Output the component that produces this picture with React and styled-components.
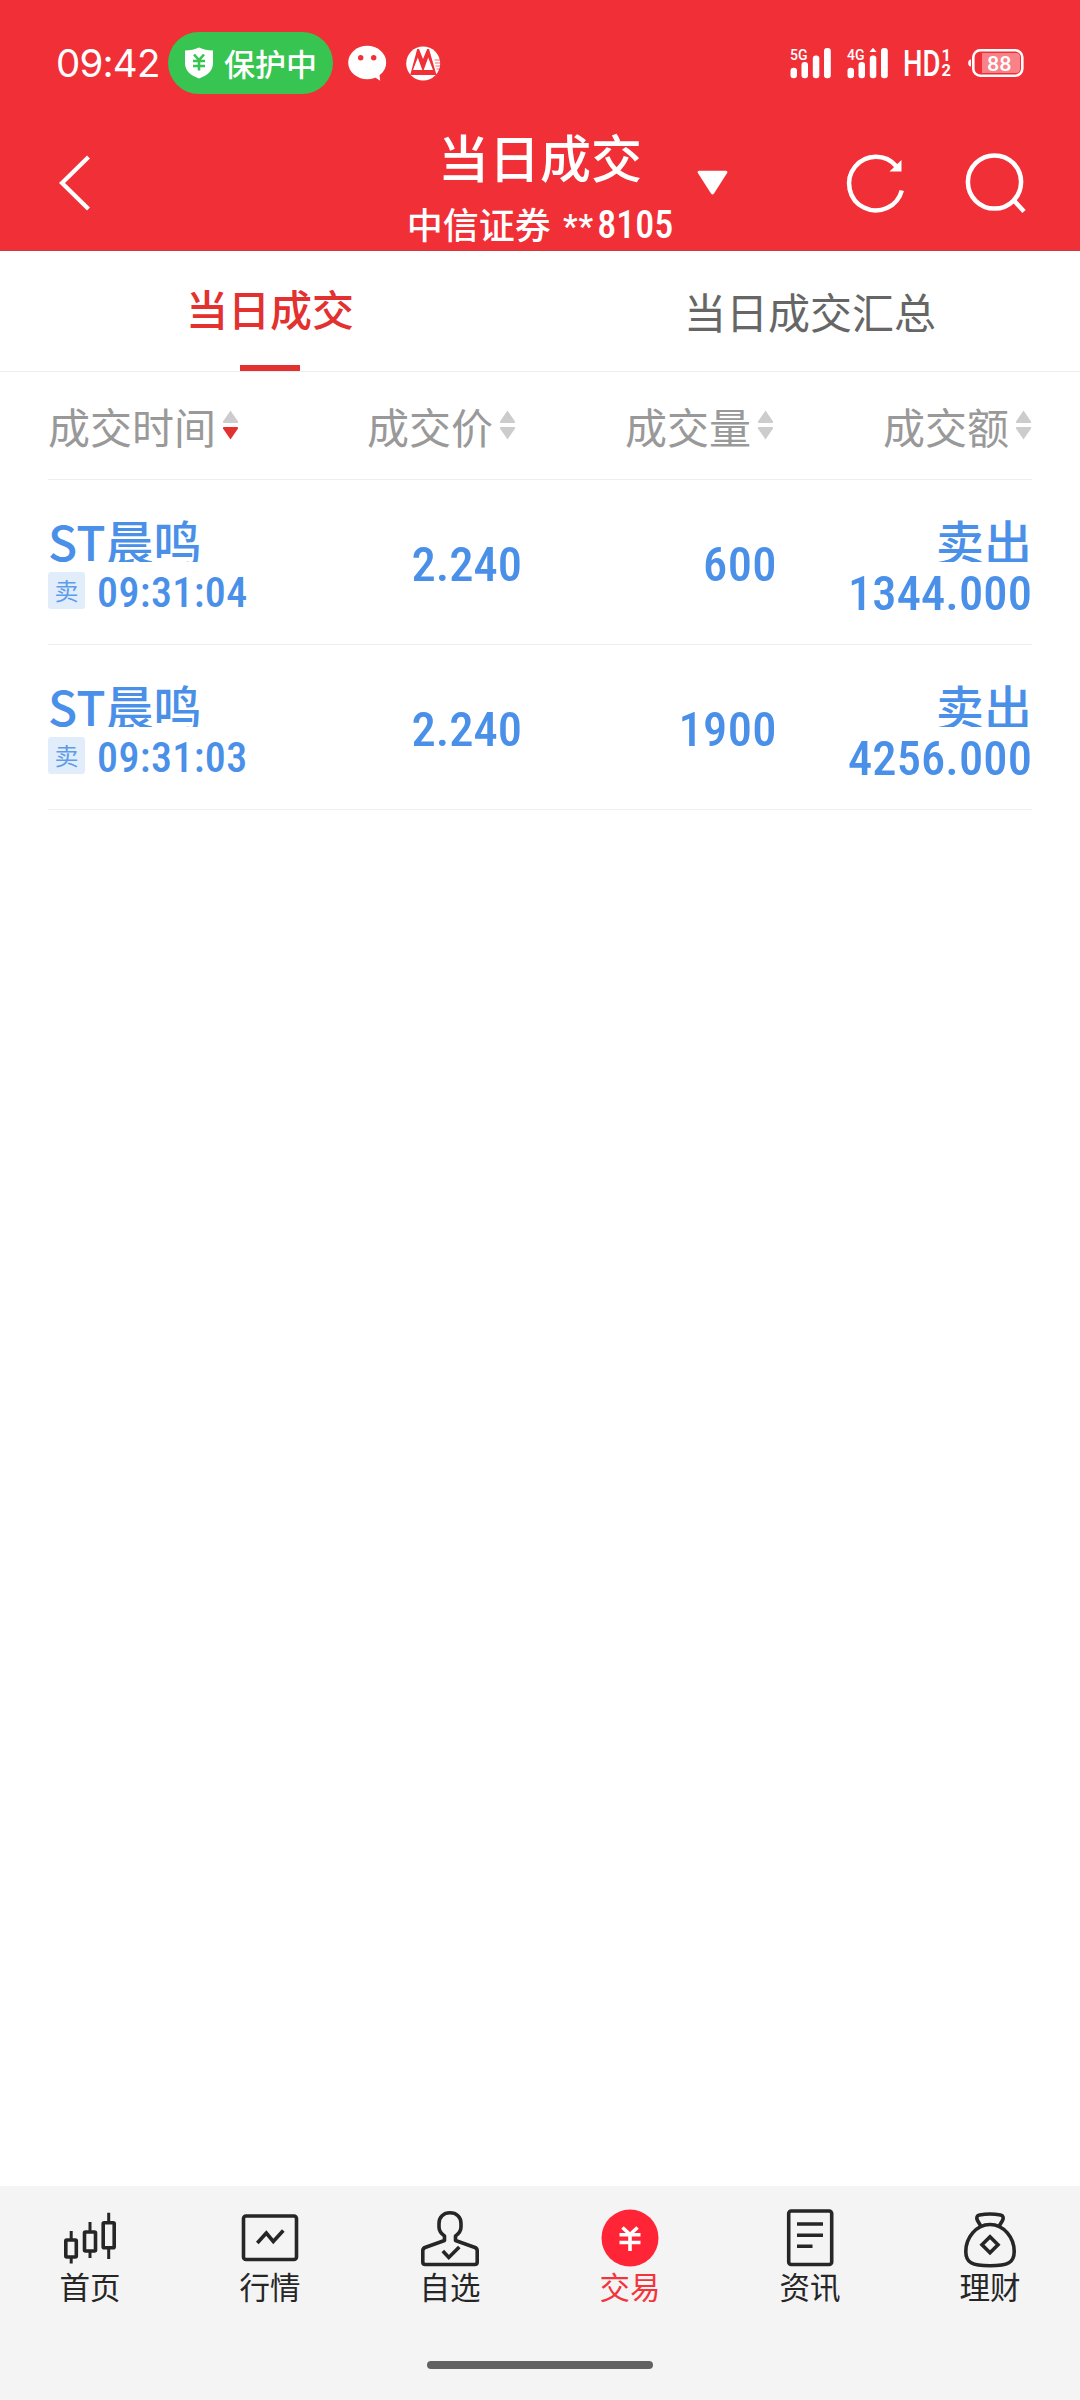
import React from "react";
import styled, { createGlobalStyle, css } from "styled-components";

const GlobalStyle = createGlobalStyle`
  * {
    box-sizing: border-box;
  }

  body {
    margin: 0;
    background-color: #ffffff;
    font-family: "Roboto", "Noto Sans CJK SC", sans-serif;
  }
`;

const StyledScreen = styled.div`
  display: flex;
  flex-direction: column;
  width: 1080px;
  height: 2400px;
  background-color: #ffffff;
`;

const StyledHeader = styled.header`
  height: 251px;
  background-color: #f12f37;
  border-bottom: 1px solid #cc3a42;
  color: #ffffff;
`;

const StyledStatusBar = styled.div`
  display: flex;
  align-items: center;
  height: 126px;
  padding: 0 56px;
`;

const StyledClock = styled.div`
  width: 112px;
  font-family: "Inter", sans-serif;
  font-size: 38.5px;
  line-height: 62px;
  letter-spacing: -0.8px;
`;

const StyledGuardPill = styled.div`
  display: flex;
  align-items: center;
  gap: 10px;
  width: 165px;
  height: 62px;
  padding-left: 16px;
  margin-right: 15px;
  border-radius: 31px;
  background-color: #38c450;
`;

const StyledGuardText = styled.span`
  font-family: "Noto Sans CJK SC", sans-serif;
  font-size: 31px;
  font-weight: 500;
  line-height: 44px;
  padding-bottom: 1px;
  white-space: nowrap;
`;

const StyledNotices = styled.div`
  display: flex;
  align-items: center;
  gap: 19px;
`;

const StyledStatusRight = styled.div`
  display: flex;
  align-items: center;
  gap: 14px;
  margin-left: auto;
`;

const StyledTitleBar = styled.div`
  display: grid;
  grid-template-columns: 390px 300px 390px;
  height: 124px;
`;

const StyledBack = styled.div`
  display: flex;
  padding: 27px 0 0 58px;
`;

const StyledTitleBlock = styled.div`
  display: flex;
  flex-direction: column;
  align-items: center;
`;

const StyledTitle = styled.div`
  font-family: "Noto Sans CJK SC", sans-serif;
  font-size: 51px;
  font-weight: 500;
  line-height: 60px;
`;

const StyledAccount = styled.div`
  display: flex;
  align-items: flex-start;
  font-family: "Noto Sans CJK SC", sans-serif;
  font-size: 36px;
  font-weight: 500;
  line-height: 50px;
  padding-top: 12px;
`;

const StyledDigits = styled.span`
  font-family: "Roboto", sans-serif;
  font-stretch: 85%;
  font-weight: 500;
  font-size: ${(props) => props.$size}px;
  letter-spacing: ${(props) => props.$spacing}px;
`;

const StyledMask = styled(StyledDigits)`
  padding: 4px 3px 0 12px;
`;

const StyledAccountTail = styled(StyledDigits)`
  padding-top: 2px;
`;

const StyledActions = styled.div`
  display: flex;
  justify-content: space-between;
`;

const StyledCaret = styled.div`
  padding: 44px 0 0 7px;
`;

const StyledTabs = styled.nav`
  display: grid;
  grid-template-columns: 1fr 1fr;
  height: 121px;
  border-bottom: 1px solid #eeeeee;
  font-family: "Noto Sans CJK SC", sans-serif;
`;

const StyledTab = styled.div`
  display: flex;
  flex-direction: column;
  align-items: center;
  justify-content: space-between;
  padding-top: 30px;
  font-size: 42px;
  line-height: 60px;
  color: #666666;

  ${(props) =>
    props.$active &&
    css`
      padding-top: 27px;
      font-weight: 500;
      color: #e2312f;

      &::after {
        content: "";
        width: 60px;
        height: 6px;
        background-color: #e2312f;
      }
    `}
`;

const StyledTable = styled.main`
  flex: 1;
  padding: 0 48px;
`;

const StyledHeadRow = styled.div`
  display: grid;
  grid-template-columns: 210px 258px 258px 258px;
  height: 108px;
  border-bottom: 1px solid #eeeeee;
`;

const StyledHeadCell = styled.div`
  display: flex;
  align-items: center;
  justify-content: ${(props) => (props.$left ? "flex-start" : "flex-end")};
  gap: 6px;
  padding-bottom: 1px;
  font-family: "Noto Sans CJK SC", sans-serif;
  font-size: 42px;
  color: #999999;
  white-space: nowrap;
`;

const StyledRow = styled.div`
  display: grid;
  grid-template-columns: 219px 255px 255px 255px;
  height: 165px;
  border-bottom: 1px solid #eeeeee;
  color: #4a90e8;
`;

const StyledStack = styled.div`
  display: flex;
  flex-direction: column;
  align-items: ${(props) => (props.$right ? "flex-end" : "flex-start")};
  padding-top: 36px;
`;

/* the line box is shorter than the glyphs, so their feet are cut off */
const StyledName = styled.div`
  height: 46px;
  overflow: hidden;
  font-family: "Noto Sans CJK SC", sans-serif;
  font-size: 48px;
  font-weight: 500;
  line-height: 48px;
  white-space: nowrap;
`;

const StyledTimeLine = styled.div`
  display: flex;
  gap: 12px;
  height: 37px;
  margin-top: 10px;
  line-height: 42px;
`;

const StyledSideTag = styled.span`
  width: 37px;
  height: 37px;
  border-radius: 3px;
  background-color: #e2edfb;
  font-family: "Noto Sans CJK SC", sans-serif;
  font-size: 24px;
  line-height: 36px;
  text-align: center;
  color: #5e9cea;
`;

const StyledAmount = styled.div`
  height: 46px;
  margin-top: 5px;
  line-height: 54px;
`;

const StyledNumberCell = styled.div`
  display: flex;
  align-items: center;
  justify-content: flex-end;
  padding-top: 4px;
`;

const StyledTabBar = styled.footer`
  display: flex;
  flex-direction: column;
  align-items: center;
  height: 214px;
  background-color: #f4f4f4;
`;

const StyledTabItems = styled.div`
  display: grid;
  grid-template-columns: repeat(6, 180px);
  height: 175px;
`;

const StyledTabItem = styled.div`
  display: flex;
  flex-direction: column;
  align-items: center;
  padding-top: 20px;
  font-family: "Noto Sans CJK SC", sans-serif;
  font-size: 30.5px;
  line-height: 32px;
  color: ${(props) => (props.$active ? "#f5333d" : "#262626")};
`;

const StyledHomeIndicator = styled.div`
  width: 226px;
  height: 8px;
  border-radius: 4px;
  background-color: #626262;
`;

const ShieldIcon = () => (
  <svg width="30" height="32" viewBox="0 0 30 32">
    <path
      d="M15 0.500C11 2.500 6 3.500 1 3.500V16c0 8 6 12.500 14 15.500 8-3 14-7.500 14-15.500V3.500C24 3.500 19 2.500 15 .500z"
      fill="#fff"
    />
    <path
      d="M10 7.500l5 5.500 5-5.500M9 14h12M9 19h12M15 13v10.500"
      stroke="#38c450"
      strokeWidth="2.600"
      fill="none"
    />
  </svg>
);

const ChatIcon = () => (
  <svg width="39" height="36" viewBox="0 0 39 36">
    <ellipse cx="19.200" cy="17.500" rx="19" ry="16.700" fill="#fff" />
    <path d="M25 31l7.200 4.700-1-8z" fill="#fff" />
    <circle cx="12.700" cy="12.700" r="2.700" fill="#f12f37" />
    <circle cx="25.700" cy="12.700" r="2.700" fill="#f12f37" />
  </svg>
);

const BankIcon = () => (
  <svg width="35" height="35" viewBox="0 0 35 35">
    <circle cx="17.200" cy="17.500" r="17" fill="#fff" />
    <path d="M4.200 29L11.200 3h1.800l4 10 4.200-10h1.800l7.500 26z" fill="#f12f37" />
    <path d="M7 24l4.800-12.500L16.300 24zM17.700 24l4.500-12.500L27 24z" fill="#fff" />
    <path d="M28.500 14h6M29 17h6M29.500 20h5M30.500 23h3.500" stroke="#f12f37" strokeWidth="1.200" opacity="0.7" />
  </svg>
);

const SignalIcon = ({ label, roaming }) => (
  <svg width="43" height="32" viewBox="0 0 43 32" overflow="visible">
    <text
      x="0"
      y="12.500"
      fontFamily="Roboto"
      fontWeight="500"
      fontSize="15.500"
      fill="#fff"
      textLength="17.500"
      lengthAdjust="spacingAndGlyphs"
    >
      {label}
    </text>
    <g fill="#fff">
      <rect x="0.500" y="20.700" width="6.500" height="10.500" rx="3.200" />
      <rect x="11.500" y="15" width="6.500" height="16.200" rx="3" />
      <rect x="22.800" y="8.500" width="6.500" height="22.700" rx="3" />
      <rect x="34" y="1" width="6.800" height="30.200" rx="3" />
      {roaming && <path d="M22.500 5L26 .800 29.600 5z" />}
    </g>
  </svg>
);

const HdIcon = () => (
  <svg width="50" height="32" viewBox="0 0 50 32" overflow="visible">
    <g fontFamily="Roboto" fontWeight="500" fill="#fff">
      <text x="-1" y="29" fontSize="36.500" textLength="37.500" lengthAdjust="spacingAndGlyphs">
        HD
      </text>
      <text x="37.500" y="14" fontSize="16.500" fontWeight="700">
        1
      </text>
      <text x="37.500" y="29" fontSize="16.500" fontWeight="700">
        2
      </text>
    </g>
  </svg>
);

const BatteryIcon = () => (
  <svg width="56" height="30" viewBox="0 0 56 30">
    <path d="M3 11.500v7C1 18.500 .200 17 .200 15S1 11.500 3 11.500z" fill="#fff" />
    <rect x="5.300" y="2.300" width="49" height="25.400" rx="7" fill="none" stroke="#fff" strokeWidth="2.600" />
    <path d="M14 5h34a4 4 0 0 1 4 4v12a4 4 0 0 1-4 4H14z" fill="#f88288" />
    <text
      x="19"
      y="22.500"
      fontFamily="Roboto"
      fontWeight="500"
      fontSize="21"
      fill="#fff"
      textLength="24.500"
      lengthAdjust="spacingAndGlyphs"
    >
      88
    </text>
  </svg>
);

const BackIcon = () => (
  <svg width="34" height="60" viewBox="0 0 34 60">
    <path d="M30.500 4L4 30l26.500 26" fill="none" stroke="#fff" strokeWidth="4.200" />
  </svg>
);

/* reload and search share one drawing strip */
const ActionIcons = () => (
  <svg width="240" height="124" viewBox="840 126 240 124">
    <g fill="none" stroke="#fff" strokeWidth="4.500">
      <path d="M901.800 190.500A26.800 26.800 0 1 1 896.500 166.500" />
      <circle cx="994.500" cy="182" r="26.600" />
      <path d="M1013.500 200l10.500 11.500" />
    </g>
    <path d="M901.500 160v11.500h-12z" fill="#fff" />
  </svg>
);

const CaretIcon = () => (
  <svg width="31" height="26" viewBox="0 0 31 26">
    <path d="M2.500 0.800h26q3 0 1.300 2.800L17 23.500q-1.500 2.200-3 0L1.200 3.600Q-.500.800 2.500.800z" fill="#fff" />
  </svg>
);

const SortIcon = ({ desc }) => (
  <svg width="17" height="30" viewBox="0 0 17 30">
    <path d="M8.500 0.500L16 11.500q.600 1.500-1 1.500H2q-1.600 0-1-1.500z" fill="#cccccc" />
    <path
      d="M8.500 29.500L16 18.500q.600-1.500-1-1.500H2q-1.600 0-1 1.500z"
      fill={desc ? "#e2312f" : "#cccccc"}
    />
  </svg>
);

const NavIcon = ({ children }) => (
  <svg
    width="64"
    height="64"
    viewBox="0 0 64 64"
    fill="none"
    stroke="#262626"
    strokeWidth="3.600"
    strokeLinejoin="round"
  >
    {children}
  </svg>
);

const navItems = [
  {
    label: "首页",
    icon: (
      <NavIcon>
        <rect x="7.800" y="34" width="10.500" height="17" rx="1" />
        <rect x="26.500" y="26" width="11" height="19" rx="1" />
        <rect x="45.200" y="16.700" width="11" height="25" rx="1" />
        <path d="M13.200 25v9M13.200 51v6.500M32 16v10M32 45v7M50.700 6.700v10M50.700 42v11" strokeWidth="3" />
      </NavIcon>
    ),
  },
  {
    label: "行情",
    icon: (
      <NavIcon>
        <rect x="5.500" y="10" width="53" height="43.500" rx="2.500" />
        <path d="M19.300 37l9-10 7 8.500 10-11" strokeLinejoin="miter" />
      </NavIcon>
    ),
  },
  {
    label: "自选",
    icon: (
      <NavIcon>
        <path d="M26.500 30v4.500L7 41.500q-2.200 1-2.200 3.200V56q0 2.500 2.500 2.500h49.400q2.500 0 2.500-2.500V44.700q0-2.200-2.200-3.200L37.500 34.500V30c3.500-2.500 5.500-5 5.500-9v-3.500C43 11 38.500 6.800 32 6.800S21 11 21 17.500V21c0 4 2 6.500 5.500 9z" />
        <path d="M24.800 45l6 6.500 10.500-10.500" strokeLinejoin="miter" />
      </NavIcon>
    ),
  },
  {
    label: "交易",
    active: true,
    icon: (
      <NavIcon>
        <circle cx="32" cy="32" r="28.500" fill="#ff2537" stroke="none" />
        <path d="M24.500 21.500l7.500 7 7.500-7M21.500 28.800h21M21.500 36.500h21M32 28v17" stroke="#fff" />
      </NavIcon>
    ),
  },
  {
    label: "资讯",
    icon: (
      <NavIcon>
        <rect x="10.700" y="5" width="43" height="53.500" rx="2.500" />
        <path d="M19 18h26M19 29.300h26M19 40.300h15.500" />
      </NavIcon>
    ),
  },
  {
    label: "理财",
    icon: (
      <NavIcon>
        <path d="M22.500 19.500l-3-5q-2-4.500 2-5.500 10.500-2 21 0 4 1 2 5.500l-3 5" />
        <path d="M32 18.500c-14 0-24.200 13.500-24.200 27 0 11 6 14.300 24.200 14.300S56.200 56.500 56.200 45.500C56.200 32 46 18.500 32 18.500z" />
        <path d="M32 30.800l8 8-8 8-8-8z" strokeLinejoin="miter" />
      </NavIcon>
    ),
  },
];

const columns = ["成交时间", "成交价", "成交量", "成交额"];

const deals = [
  { id: 1, name: "ST晨鸣", time: "09:31:04", price: "2.240", volume: "600", amount: "1344.000" },
  { id: 2, name: "ST晨鸣", time: "09:31:03", price: "2.240", volume: "1900", amount: "4256.000" },
];

function DealRow({ deal }) {
  return (
    <StyledRow>
      <StyledStack>
        <StyledName>{deal.name}</StyledName>
        <StyledTimeLine>
          <StyledSideTag>卖</StyledSideTag>
          <StyledDigits $size={42} $spacing={0.4}>
            {deal.time}
          </StyledDigits>
        </StyledTimeLine>
      </StyledStack>
      <StyledNumberCell>
        <StyledDigits $size={48.5} $spacing={0}>
          {deal.price}
        </StyledDigits>
      </StyledNumberCell>
      <StyledNumberCell>
        <StyledDigits $size={48.5} $spacing={0.4}>
          {deal.volume}
        </StyledDigits>
      </StyledNumberCell>
      <StyledStack $right>
        <StyledName>卖出</StyledName>
        <StyledAmount>
          <StyledDigits $size={48.5} $spacing={0.1}>
            {deal.amount}
          </StyledDigits>
        </StyledAmount>
      </StyledStack>
    </StyledRow>
  );
}

export default function App() {
  return (
    <StyledScreen>
      <GlobalStyle />
      <StyledHeader>
        <StyledStatusBar>
          <StyledClock>09:42</StyledClock>
          <StyledGuardPill>
            <ShieldIcon />
            <StyledGuardText>保护中</StyledGuardText>
          </StyledGuardPill>
          <StyledNotices>
            <ChatIcon />
            <BankIcon />
          </StyledNotices>
          <StyledStatusRight>
            <SignalIcon label="5G" />
            <SignalIcon label="4G" roaming />
            <HdIcon />
            <BatteryIcon />
          </StyledStatusRight>
        </StyledStatusBar>
        <StyledTitleBar>
          <StyledBack>
            <BackIcon />
          </StyledBack>
          <StyledTitleBlock>
            <StyledTitle>当日成交</StyledTitle>
            <StyledAccount>
              中信证券
              <StyledMask $size={33} $spacing={1}>
                **
              </StyledMask>
              <StyledAccountTail $size={38} $spacing={0}>
                8105
              </StyledAccountTail>
            </StyledAccount>
          </StyledTitleBlock>
          <StyledActions>
            <StyledCaret>
              <CaretIcon />
            </StyledCaret>
            <ActionIcons />
          </StyledActions>
        </StyledTitleBar>
      </StyledHeader>
      <StyledTabs>
        <StyledTab $active>当日成交</StyledTab>
        <StyledTab>当日成交汇总</StyledTab>
      </StyledTabs>
      <StyledTable>
        <StyledHeadRow>
          {columns.map((title, index) => (
            <StyledHeadCell key={title} $left={index === 0}>
              {title}
              <SortIcon desc={index === 0} />
            </StyledHeadCell>
          ))}
        </StyledHeadRow>
        {deals.map((deal) => (
          <DealRow key={deal.id} deal={deal} />
        ))}
      </StyledTable>
      <StyledTabBar>
        <StyledTabItems>
          {navItems.map((item) => (
            <StyledTabItem key={item.label} $active={item.active}>
              {item.icon}
              {item.label}
            </StyledTabItem>
          ))}
        </StyledTabItems>
        <StyledHomeIndicator />
      </StyledTabBar>
    </StyledScreen>
  );
}
